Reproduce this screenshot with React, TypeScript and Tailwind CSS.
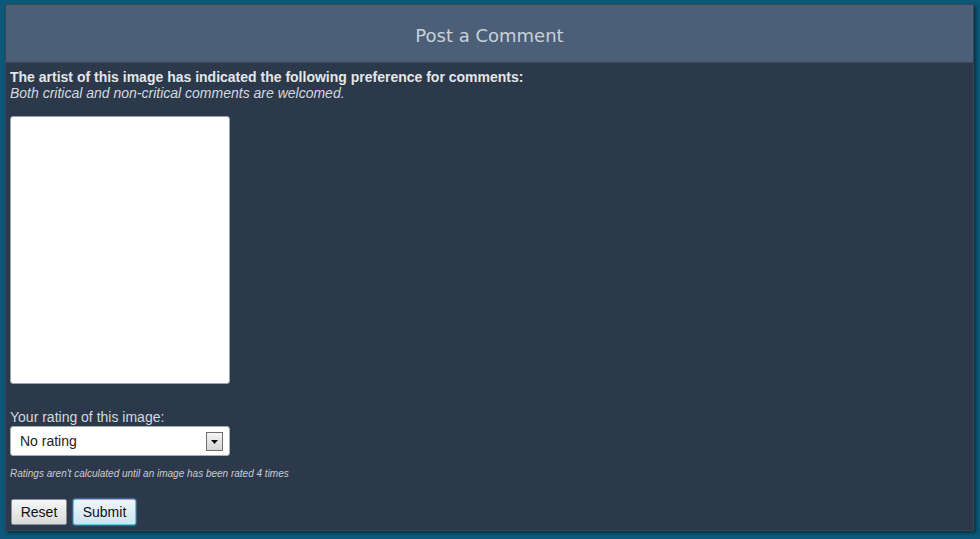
import { useState } from "react";

export default function App() {
  const [comment, setComment] = useState("");
  const [rating, setRating] = useState("none");

  return (
    <div className="h-[539px] w-[980px] overflow-hidden bg-[#0b5878] pl-[5px] pt-[4px] font-['Liberation_Sans',Arial,sans-serif]">
      <div className="flex h-[527px] w-[969px] flex-col border border-[#3b4452] bg-[#2c394b] shadow-[2px_2px_3px_rgba(0,0,0,0.45)]">
        <div className="flex h-[58px] shrink-0 items-center justify-center border-b border-[#3d4858] bg-[#4c5f78] pt-[3px]">
          <h2 className="font-['DejaVu_Sans',Verdana,sans-serif] text-[18px] text-[#c9d1da]">Post a Comment</h2>
        </div>
        <div className="flex flex-col px-[4px] pt-[6px]">
          <p className="text-[14px] font-bold leading-[16px] text-[#e3e6ea]">
            The artist of this image has indicated the following preference for comments:
          </p>
          <p className="text-[14px] italic leading-[16px] text-[#d3d8de]">
            Both critical and non-critical comments are welcomed.
          </p>
          <textarea
            value={comment}
            onChange={(e) => setComment(e.target.value)}
            className="mt-[15px] h-[268px] w-[220px] resize-none rounded-[3px] border border-[#9aa3ad] bg-white p-1 text-[13px] text-black outline-none"
          />
          <label className="mt-[25px] text-[14px] leading-[16px] text-[#d3d8de]">Your rating of this image:</label>
          <div className="relative mt-[1px] h-[30px] w-[220px] rounded-[3px] border border-[#a5adb6] bg-white">
            <select
              value={rating}
              onChange={(e) => setRating(e.target.value)}
              className="h-full w-full appearance-none bg-transparent pl-[9px] text-[14px] text-[#222] outline-none"
            >
              <option value="none">No rating</option>
              <option value="1">1</option>
              <option value="2">2</option>
              <option value="3">3</option>
              <option value="4">4</option>
              <option value="5">5</option>
            </select>
            <span className="pointer-events-none absolute right-[6px] top-[5px] flex h-[19px] w-[17px] items-center justify-center border border-[#6e6e6e] bg-gradient-to-b from-[#f4f4f4] to-[#d6d6d6]">
              <svg width="7" height="4" viewBox="0 0 7 4">
                <path d="M0 0h7L3.5 4z" fill="#111" />
              </svg>
            </span>
          </div>
          <p className="mt-[12px] text-[10px] italic leading-[12px] text-[#c8cdd3]">
            Ratings aren't calculated until an image has been rated 4 times
          </p>
          <div className="mt-[19px] flex gap-[6px] pl-[1px]">
            <button className="h-[26px] w-[56px] rounded-[2px] border border-[#8a8f96] bg-gradient-to-b from-[#f6f6f6] to-[#d9d9d9] text-[14px] text-[#111]">
              Reset
            </button>
            <button className="h-[26px] w-[63px] rounded-[2px] border border-[#5fc3ea] bg-gradient-to-b from-[#eef7fc] to-[#cfe3ee] text-[14px] text-[#111] shadow-[0_0_2px_#7fd3f5]">
              Submit
            </button>
          </div>
        </div>
      </div>
    </div>
  );
}
